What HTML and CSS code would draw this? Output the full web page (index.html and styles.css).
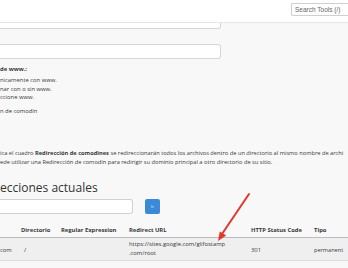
FILE: index.html
```html
<!DOCTYPE html>
<html lang="es">
<head>
    <meta charset="UTF-8">
    <meta name="viewport" content="width=device-width, initial-scale=1.0">
    <title>Redirecciones</title>
    <link rel="stylesheet" href="styles.css">
</head>
<body>
    <header class="topbar">
        <div class="search">Search Tools (/)</div>
    </header>

    <main class="content">
        <div class="field field-cut"></div>
        <div class="field"></div>

        <div class="options">
            <p class="label">de www.:</p>
            <p>nicamente con www.</p>
            <p>nar con o sin www.</p>
            <p>ccione www.</p>
            <p class="wild">n de comodín</p>
        </div>

        <p class="note">ica el cuadro <b>Redirección de comodines</b> se redireccionarán todos los archivos dentro de un directorio al mismo nombre de archi<br>ede utilizar una Redirección de comodín para redirigir su dominio principal a otro directorio de su sitio.</p>

        <h2>ecciones actuales</h2>

        <div class="filter">
            <div class="filter-input"></div>
            <button class="btn-go">Ir</button>
        </div>

        <div class="table">
            <div class="row head">
                <span></span>
                <span>Directorio</span>
                <span>Regular Expression</span>
                <span>Redirect URL</span>
                <span>HTTP Status Code</span>
                <span>Tipo</span>
            </div>
            <div class="row item">
                <span>com</span>
                <span class="dir">/</span>
                <span></span>
                <span class="url">https://sites.google.com/glifostamp<wbr>.com/root</span>
                <span>301</span>
                <span class="type">permanent</span>
            </div>
        </div>
    </main>

    <svg class="arrow" width="348" height="268" viewBox="0 0 348 268">
        <line x1="249" y1="194" x2="222" y2="234" stroke="#e5362b" stroke-width="2" stroke-linecap="round"/>
        <polygon points="218,241 226.2,235.6 219.8,231.4" fill="#e5362b"/>
    </svg>
</body>
</html>
```

FILE: styles.css
```css
body {
    margin: 0;
    font-family: 'Open Sans', 'DejaVu Sans', sans-serif;
    font-size: 5.85px;
    color: #383838;
    background: #f8f8f8;
    overflow: hidden;
    width: 348px;
    height: 268px;
}
p {
    margin: 0;
}
.topbar {
    height: 23px;
    box-sizing: border-box;
    background: #fff;
    border-bottom: 1px solid #e6e6e6;
    display: flex;
    justify-content: flex-end;
    padding-top: 3px;
}
.search {
    width: 57px;
    height: 13px;
    box-sizing: border-box;
    border: 1px solid #cfcfcf;
    border-right: none;
    border-radius: 2px 0 0 2px;
    padding-left: 3px;
    font-family: 'Liberation Sans', Arial, sans-serif;
    font-size: 6.5px;
    line-height: 11px;
    color: #666;
}
.content {
    display: flex;
    flex-direction: column;
    white-space: nowrap;
}
.field {
    width: 221px;
    height: 15px;
    box-sizing: border-box;
    background: #fff;
    border: 1px solid #d6d6d6;
    border-left: none;
    border-radius: 0 3px 3px 0;
    margin-top: 15px;
}
.field-cut {
    height: 6px;
    border-top: none;
    margin-top: 0;
    border-radius: 0 0 3px 0;
}
.options {
    margin-top: 6px;
    line-height: 8.5px;
}
.options .label {
    font-weight: 700;
    margin-bottom: 2.5px;
}
.options .wild {
    margin-top: 5px;
}
.note {
    margin-top: 33.5px;
    line-height: 9px;
    font-size: 5.7px;
}
h2 {
    margin: 14.5px 0 0;
    font-size: 12px;
    font-weight: 400;
    line-height: 14px;
    color: #333;
}
.filter {
    display: flex;
    align-items: flex-start;
    gap: 12px;
    margin-top: 4px;
}
.filter-input {
    width: 133px;
    height: 15px;
    box-sizing: border-box;
    background: #fff;
    border: 1px solid #d0d0d0;
    border-left: none;
    border-radius: 0 3px 3px 0;
}
.btn-go {
    width: 15px;
    height: 15px;
    padding: 0;
    border: none;
    border-radius: 2px;
    background: #3a8ad8;
    color: #fff;
    font-family: 'Open Sans', sans-serif;
    font-size: 4px;
    line-height: 15px;
}
.table {
    margin-top: 12px;
}
.row {
    display: grid;
    grid-template-columns: 21px 40px 68px 122px 63px 1fr;
}
.head {
    font-weight: 700;
    line-height: 8px;
    padding-bottom: 3px;
    border-bottom: 1px solid #bdbdbd;
}
.item {
    background: #efefef;
    align-items: center;
    padding: 2px 0;
    line-height: 9px;
    border-bottom: 1px solid #dedede;
}
.item span {
    padding-top: 2px;
}
.item .dir {
    padding-left: 3px;
}
.item .url {
    padding-top: 0;
    white-space: normal;
    padding-right: 10px;
}
.item .type {
    font-size: 5.6px;
}
.arrow {
    position: absolute;
    left: 0;
    top: 0;
}
```
